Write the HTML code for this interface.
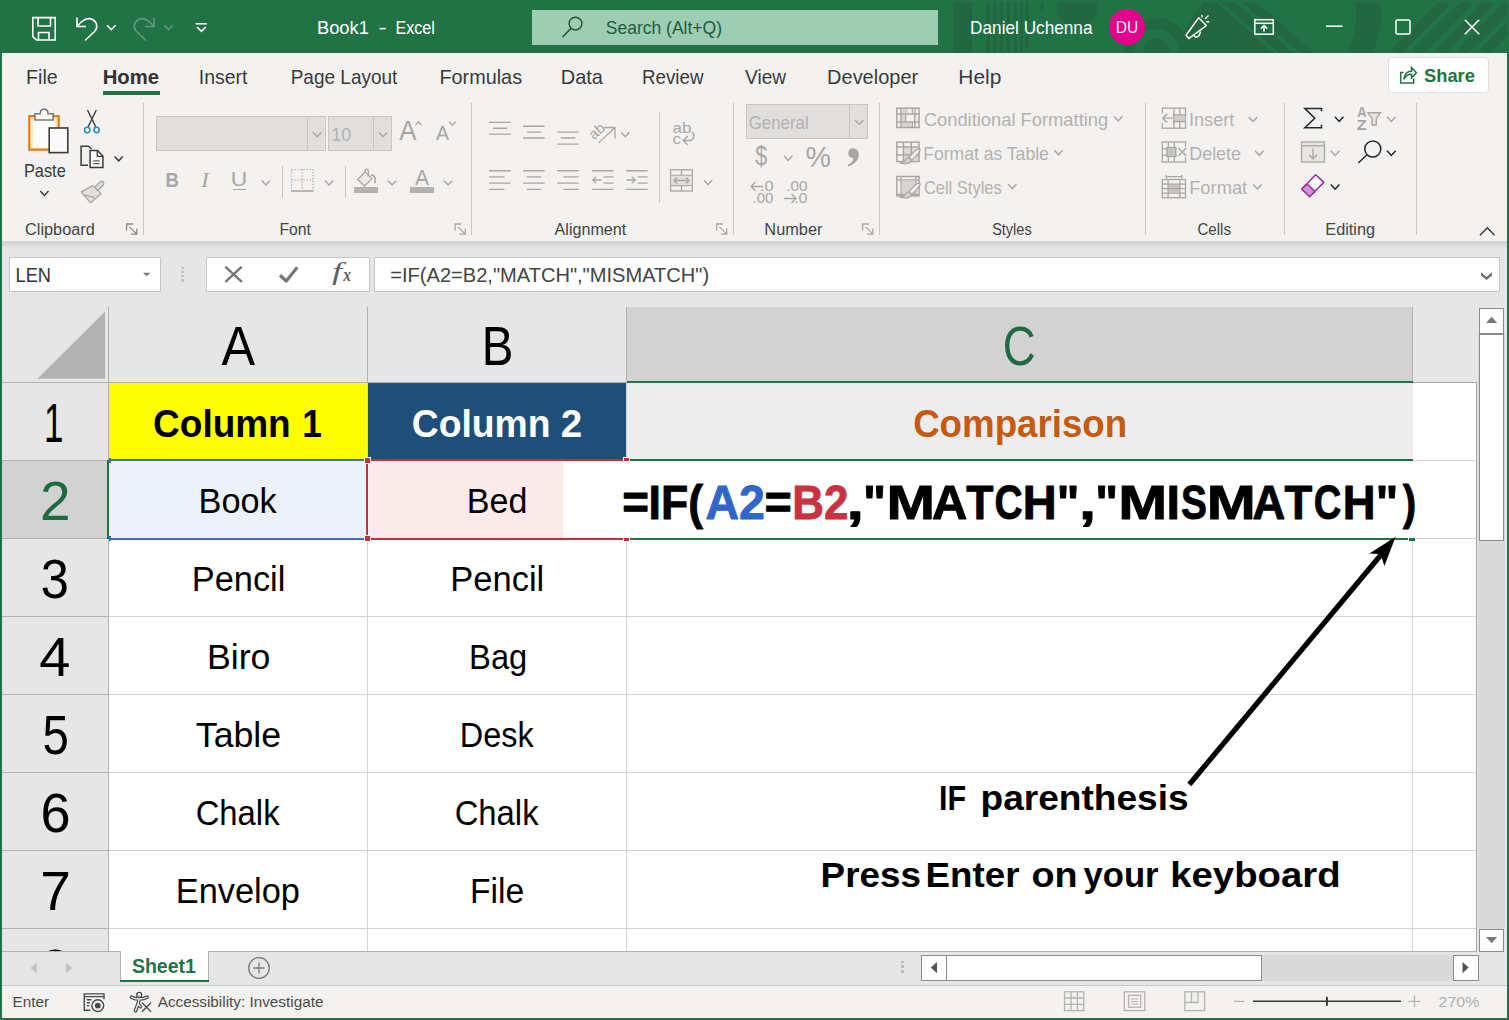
<!DOCTYPE html>
<html lang="en"><head><meta charset="utf-8"><title>Book1 - Excel</title>
<style>
html,body{margin:0;padding:0;}
body{width:1509px;height:1020px;overflow:hidden;position:relative;background:#e6e6e6;font-family:'Liberation Sans', sans-serif;}
#app div{position:absolute;box-sizing:border-box;}
#app{position:absolute;left:0;top:0;width:1509px;height:1020px;overflow:hidden;}
svg#ov{position:absolute;left:0;top:0;}
svg#ov text{font-family:'Liberation Sans', sans-serif;white-space:pre;}
</style></head><body>
<div id="app">
<div style="left:0px;top:0px;width:1509px;height:1020px;background:#217346;"></div>
<div style="left:2px;top:53px;width:1505px;height:188px;background:#f3f2f1;"></div>
<div style="left:2px;top:241px;width:1505px;height:8px;background:linear-gradient(#cfcfcf,#e6e6e6);"></div>
<div style="left:2px;top:249px;width:1505px;height:702px;background:#e6e6e6;"></div>
<div style="left:532px;top:10px;width:406px;height:35px;background:#9fcdb3;"></div>
<div style="left:103px;top:90.5px;width:57px;height:4px;background:#217346;"></div>
<div style="left:1388px;top:57px;width:101px;height:36px;background:#ffffff;border:1px solid #e1dfdd;border-radius:4px;"></div>
<div style="left:143px;top:103px;width:1px;height:132px;background:#c8c6c4;"></div>
<div style="left:471px;top:103px;width:1px;height:132px;background:#c8c6c4;"></div>
<div style="left:733px;top:103px;width:1px;height:132px;background:#c8c6c4;"></div>
<div style="left:879px;top:103px;width:1px;height:132px;background:#c8c6c4;"></div>
<div style="left:1145px;top:103px;width:1px;height:132px;background:#c8c6c4;"></div>
<div style="left:1284px;top:103px;width:1px;height:132px;background:#c8c6c4;"></div>
<div style="left:1416px;top:103px;width:1px;height:132px;background:#c8c6c4;"></div>
<div style="left:282px;top:166px;width:1px;height:32px;background:#c8c6c4;"></div>
<div style="left:345px;top:166px;width:1px;height:32px;background:#c8c6c4;"></div>
<div style="left:659px;top:112px;width:1px;height:91px;background:#c8c6c4;"></div>
<div style="left:156px;top:116px;width:170px;height:35px;background:#e1dfdd;border:1px solid #c8c6c4;"></div>
<div style="left:307px;top:116px;width:1px;height:35px;background:#c8c6c4;"></div>
<div style="left:328px;top:116px;width:64px;height:35px;background:#e1dfdd;border:1px solid #c8c6c4;"></div>
<div style="left:373px;top:116px;width:1px;height:35px;background:#c8c6c4;"></div>
<div style="left:232.5px;top:188.5px;width:13px;height:1.4px;background:#a8a6a4;"></div>
<div style="left:354px;top:187px;width:24px;height:6px;background:#b3b0ad;"></div>
<div style="left:410px;top:187px;width:24px;height:6px;background:#b3b0ad;"></div>
<div style="left:746px;top:104px;width:122px;height:35px;background:#e1dfdd;border:1px solid #c8c6c4;"></div>
<div style="left:849px;top:104px;width:1px;height:35px;background:#c8c6c4;"></div>
<div style="left:9px;top:257px;width:152px;height:35px;background:#ffffff;border:1px solid #c6c6c6;"></div>
<div style="left:181px;top:266.5px;width:3px;height:2.6px;background:#c2c2c2;"></div>
<div style="left:181px;top:270.7px;width:3px;height:2.6px;background:#c2c2c2;"></div>
<div style="left:181px;top:274.9px;width:3px;height:2.6px;background:#c2c2c2;"></div>
<div style="left:181px;top:279.1px;width:3px;height:2.6px;background:#c2c2c2;"></div>
<div style="left:206px;top:257px;width:164px;height:35px;background:#ffffff;border:1px solid #c6c6c6;"></div>
<div style="left:374px;top:257px;width:1126px;height:35px;background:#ffffff;border:1px solid #c6c6c6;"></div>
<div style="left:109px;top:383px;width:1367px;height:568px;background:#ffffff;"></div>
<div style="left:627px;top:307px;width:786px;height:75px;background:#d2d2d2;"></div>
<div style="left:108px;top:307px;width:1px;height:76px;background:#b1b1b1;"></div>
<div style="left:367px;top:307px;width:1px;height:76px;background:#b1b1b1;"></div>
<div style="left:626px;top:307px;width:1px;height:76px;background:#b1b1b1;"></div>
<div style="left:1412px;top:307px;width:1px;height:76px;background:#b1b1b1;"></div>
<div style="left:2px;top:382px;width:1475px;height:1px;background:#b1b1b1;"></div>
<div style="left:627px;top:381px;width:786px;height:2px;background:#217346;"></div>
<div style="left:108px;top:382px;width:1px;height:569px;background:#b1b1b1;"></div>
<div style="left:2px;top:460px;width:106px;height:1px;background:#b1b1b1;"></div>
<div style="left:2px;top:538px;width:106px;height:1px;background:#b1b1b1;"></div>
<div style="left:2px;top:616px;width:106px;height:1px;background:#b1b1b1;"></div>
<div style="left:2px;top:694px;width:106px;height:1px;background:#b1b1b1;"></div>
<div style="left:2px;top:772px;width:106px;height:1px;background:#b1b1b1;"></div>
<div style="left:2px;top:850px;width:106px;height:1px;background:#b1b1b1;"></div>
<div style="left:2px;top:928px;width:106px;height:1px;background:#b1b1b1;"></div>
<div style="left:2px;top:461px;width:106px;height:77px;background:#d2d2d2;"></div>
<div style="left:107px;top:460px;width:2px;height:79px;background:#217346;"></div>
<div style="left:367px;top:383px;width:1px;height:568px;background:#d4d4d4;"></div>
<div style="left:626px;top:383px;width:1px;height:568px;background:#d4d4d4;"></div>
<div style="left:1412px;top:383px;width:1px;height:568px;background:#d4d4d4;"></div>
<div style="left:109px;top:460px;width:1367px;height:1px;background:#d4d4d4;"></div>
<div style="left:109px;top:538px;width:1367px;height:1px;background:#d4d4d4;"></div>
<div style="left:109px;top:616px;width:1367px;height:1px;background:#d4d4d4;"></div>
<div style="left:109px;top:694px;width:1367px;height:1px;background:#d4d4d4;"></div>
<div style="left:109px;top:772px;width:1367px;height:1px;background:#d4d4d4;"></div>
<div style="left:109px;top:850px;width:1367px;height:1px;background:#d4d4d4;"></div>
<div style="left:109px;top:928px;width:1367px;height:1px;background:#d4d4d4;"></div>
<div style="left:1476px;top:383px;width:1px;height:568px;background:#a6a6a6;"></div>
<div style="left:1413px;top:382px;width:64px;height:1px;background:#a6a6a6;"></div>
<div style="left:109px;top:383px;width:258px;height:76.5px;background:#ffff00;"></div>
<div style="left:368px;top:383px;width:258px;height:76.5px;background:#1f4e79;"></div>
<div style="left:627px;top:383px;width:786px;height:76.5px;background:#ededed;"></div>
<div style="left:110px;top:461px;width:255px;height:77px;background:#edf1fa;"></div>
<div style="left:369px;top:461px;width:194px;height:77px;background:#fbeaea;"></div>
<div style="left:563px;top:461px;width:850px;height:77px;background:#ffffff;"></div>
<div style="left:630px;top:459px;width:783px;height:2px;background:#217346;"></div>
<div style="left:630px;top:538px;width:778px;height:2px;background:#217346;"></div>
<div style="left:1409px;top:538px;width:6px;height:3px;background:#217346;box-shadow:-1px 0 0 0 #ffffff;"></div>
<div style="left:111px;top:459px;width:253px;height:2px;background:#3c6cc4;"></div>
<div style="left:111px;top:538px;width:253px;height:2px;background:#3c6cc4;"></div>
<div style="left:109px;top:461px;width:1px;height:77px;background:#ffffff;"></div>
<div style="left:371px;top:459px;width:252px;height:2px;background:#c0323e;"></div>
<div style="left:371px;top:538px;width:252px;height:2px;background:#c0323e;"></div>
<div style="left:365px;top:461px;width:1px;height:77px;background:#ffffff;"></div>
<div style="left:368px;top:461px;width:1px;height:77px;background:#ffffff;"></div>
<div style="left:366px;top:461px;width:2px;height:77px;background:#c0323e;"></div>
<div style="left:365px;top:458px;width:5px;height:5px;background:#c0323e;box-shadow:0 0 0 1px #ffffff;"></div>
<div style="left:365px;top:536px;width:5px;height:5px;background:#c0323e;box-shadow:0 0 0 1px #ffffff;"></div>
<div style="left:624px;top:458px;width:5px;height:3px;background:#c0323e;box-shadow:0 0 0 1px #ffffff;"></div>
<div style="left:624px;top:538px;width:5px;height:3px;background:#c0323e;box-shadow:0 0 0 1px #ffffff;"></div>
<div style="left:109px;top:458px;width:2px;height:5px;background:#3c6cc4;"></div>
<div style="left:109px;top:536px;width:2px;height:5px;background:#3c6cc4;"></div>
<div style="left:1477px;top:307px;width:30px;height:644px;background:#e6e6e6;"></div>
<div style="left:1478px;top:333px;width:27px;height:596px;background:#d9d9d9;"></div>
<div style="left:1479px;top:308px;width:25px;height:25.5px;background:#fff;border:1px solid #8c8c8c;"></div>
<div style="left:1479px;top:333.5px;width:25px;height:207px;background:#fff;border:1px solid #8c8c8c;"></div>
<div style="left:2px;top:951px;width:1505px;height:35px;background:#e6e6e6;"></div>
<div style="left:2px;top:951px;width:1475px;height:1px;background:#b1b1b1;"></div>
<div style="left:120px;top:951px;width:89px;height:31px;background:#ffffff;border-left:1px solid #b1b1b1;border-right:1px solid #b1b1b1;"></div>
<div style="left:120px;top:979.5px;width:89px;height:2.3px;background:#217346;"></div>
<div style="left:900.5px;top:960.5px;width:3px;height:2.6px;background:#bdbdbd;"></div>
<div style="left:900.5px;top:965.3px;width:3px;height:2.6px;background:#bdbdbd;"></div>
<div style="left:900.5px;top:970.1px;width:3px;height:2.6px;background:#bdbdbd;"></div>
<div style="left:921px;top:955px;width:558px;height:25.5px;background:#d9d9d9;"></div>
<div style="left:921px;top:955px;width:25.5px;height:25.5px;background:#fff;border:1px solid #8c8c8c;"></div>
<div style="left:945.5px;top:955px;width:316px;height:25.5px;background:#fff;border:1px solid #8c8c8c;"></div>
<div style="left:1453px;top:955px;width:25.5px;height:25.5px;background:#fff;border:1px solid #8c8c8c;"></div>
<div style="left:1479px;top:928.5px;width:25px;height:23.5px;background:#fff;border:1px solid #8c8c8c;"></div>
<div style="left:2px;top:985.5px;width:1505px;height:32.7px;background:#f3f2f1;"></div>
<div style="left:2px;top:985px;width:1505px;height:1px;background:#c8c8c8;"></div>
<svg id="ov" width="1509" height="1020" viewBox="0 0 1509 1020">
<defs><clipPath id="tb"><rect x="2" y="2" width="1505" height="51"/></clipPath></defs><g clip-path="url(#tb)" fill="none" stroke="#22673f"><rect x="953" y="0" width="19" height="53" fill="#22673f" stroke="none"/><path d="M988.200 0 V53 M994.800 0 V53 M1001.400 0 V53 M1008.300 0 V53 M1015.300 0 V53 M1021.500 0 V53 M1027.200 0 V48" stroke-width="3.200"/><path d="M1042 0 V11" stroke-width="3"/><circle cx="1077" cy="8" r="20" fill="#22673f" stroke="none"/><circle cx="1156.500" cy="51" r="27.400" stroke-width="10.800"/><circle cx="1156.500" cy="51" r="13" fill="#22673f" stroke="none"/><path d="M1180 40 C1190 20 1200 8 1204 0 H1222 L1290 53 H1180 Z" fill="#22673f" stroke="none"/><path d="M1216 -3 L1282 56 M1236 -3 L1302 56 M1256 -3 L1322 56" stroke="#217346" stroke-width="7"/><path d="M1222 -3 L1290 56 M1243 -3 L1311 56" stroke-width="9"/><path d="M1366 -3 Q1374 26 1358 56" stroke-width="24"/><path d="M1395 53 L1446 2 M1417 53 L1468 2 M1439 53 L1490 2 M1461 53 L1512 2 M1483 53 L1534 2" stroke-width="10"/></g>
<g fill="none" stroke="#ffffff" stroke-width="1.6"><path d="M32.8 17.6 H55.2 V40 H36.5 L32.8 36.6 Z"/><path d="M38 17.6 V26 H50.5 V17.6"/><path d="M38.5 40 V32.5 H49 V40"/></g>
<path d="M77 17.5 V26.5 H86 M77.5 26 C82 20 88 17 92.5 19.5 C97.5 22.5 98 28 94.5 31.5 L85 40.5" fill="none" stroke="#ffffff" stroke-width="1.6"/>
<path d="M107 25.2 L111.3 29.6 L115.6 25.2" fill="none" stroke="#ffffff" stroke-width="1.5"/>
<path d="M154 17.5 V26.5 H145 M153.5 26 C149 20 143 17 138.5 19.5 C133.500 22.5 133 28 136.5 31.500 L146 40.5" fill="none" stroke="#5f9b7a" stroke-width="1.6"/>
<path d="M164.3 25.2 L168.60000000000002 29.6 L172.9 25.2" fill="none" stroke="#5f9b7a" stroke-width="1.5"/>
<path d="M195.500 23.8 H207" stroke="#ffffff" stroke-width="1.5"/>
<path d="M197 27 L201.4 31.4 L205.8 27" fill="none" stroke="#ffffff" stroke-width="1.6"/>
<text y="33.5" font-size="18.5" fill="#ffffff"><tspan x="317.04" textLength="51.79" lengthAdjust="spacingAndGlyphs">Book1</tspan> <tspan x="378.5" textLength="8.16" lengthAdjust="spacingAndGlyphs">-</tspan> <tspan x="395.51" textLength="39.34" lengthAdjust="spacingAndGlyphs">Excel</tspan></text>
<g fill="none" stroke="#1f5c3a" stroke-width="1.5"><circle cx="575.500" cy="23.6" r="6.4"/><path d="M571 28.400 L562.5 37"/></g>
<text x="605.71" y="33.5" font-size="18.5" fill="#1f5c3a" textLength="116.36" lengthAdjust="spacingAndGlyphs">Search (Alt+Q)</text>
<text x="970.12" y="33.8" font-size="18.5" fill="#ffffff" textLength="122.39" lengthAdjust="spacingAndGlyphs">Daniel Uchenna</text>
<circle cx="1127" cy="27" r="18" fill="#e3008c"/>
<text x="1115.75" y="33" font-size="16" fill="#fdeaf5" textLength="22.48" lengthAdjust="spacingAndGlyphs">DU</text>
<g fill="none" stroke="#ffffff" stroke-width="1.5" stroke-linejoin="round"><path d="M1186 35.200 L1188.900 38.500 L1206.300 25.600 L1198.700 17.800 Z"/><path d="M1193.900 35.300 C1194.800 38.200 1199.500 37.800 1200.400 31.500"/><path d="M1201.800 15 L1202.200 17.300 M1205 18.900 L1208.500 15.400 M1206.300 21.700 H1209.200" stroke-width="1.4"/></g>
<g fill="none" stroke="#ffffff" stroke-width="1.5"><rect x="1254.800" y="19.700" width="18.500" height="14.500"/><path d="M1254.800 23.300 H1273.300"/><path d="M1264 31.800 V26 M1260.800 28.600 L1264 25.600 L1267.200 28.600"/></g>
<path d="M1326 26.200 H1342.500" stroke="#ffffff" stroke-width="1.5"/>
<rect x="1396" y="19.900" width="14" height="14" rx="1.500" fill="none" stroke="#ffffff" stroke-width="1.5"/>
<path d="M1464.800 19.800 L1479.200 34.200 M1479.200 19.800 L1464.800 34.200" stroke="#ffffff" stroke-width="1.5"/>
<text x="26.02" y="83.9" font-size="19.8" fill="#3b3a39" textLength="31.79" lengthAdjust="spacingAndGlyphs">File</text>
<text x="198.85" y="83.9" font-size="19.8" fill="#3b3a39" textLength="48.67" lengthAdjust="spacingAndGlyphs">Insert</text>
<text x="290.68" y="83.9" font-size="19.8" fill="#3b3a39" textLength="106.73" lengthAdjust="spacingAndGlyphs">Page Layout</text>
<text x="439.52" y="83.9" font-size="19.8" fill="#3b3a39" textLength="82.53" lengthAdjust="spacingAndGlyphs">Formulas</text>
<text x="560.7" y="83.9" font-size="19.8" fill="#3b3a39" textLength="42.25" lengthAdjust="spacingAndGlyphs">Data</text>
<text x="642.0" y="83.9" font-size="19.8" fill="#3b3a39" textLength="61.48" lengthAdjust="spacingAndGlyphs">Review</text>
<text x="745.1" y="83.9" font-size="19.8" fill="#3b3a39" textLength="41.09" lengthAdjust="spacingAndGlyphs">View</text>
<text x="827.1" y="83.9" font-size="19.8" fill="#3b3a39" textLength="91.06" lengthAdjust="spacingAndGlyphs">Developer</text>
<text x="958.33" y="83.9" font-size="19.8" fill="#3b3a39" textLength="43.05" lengthAdjust="spacingAndGlyphs">Help</text>
<text x="102.68" y="83.9" font-size="19.8" fill="#323130" font-weight="700" textLength="56.29" lengthAdjust="spacingAndGlyphs">Home</text>
<g fill="none" stroke="#217346" stroke-width="1.5"><path d="M1403.500 72.500 H1400.700 V83 H1413.700 V78.500"/><path d="M1403.800 79.500 C1404 73.500 1408 71 1411.500 71.200 V67.400 L1416.400 72.700 L1411.500 77.800 V74.300 C1408.500 74.200 1405.500 75.500 1403.800 79.500 Z"/></g>
<text x="1424.05" y="82.3" font-size="19" fill="#217346" font-weight="700" textLength="50.78" lengthAdjust="spacingAndGlyphs">Share</text>
<text x="25.09" y="234.5" font-size="15.8" fill="#444444" textLength="69.68" lengthAdjust="spacingAndGlyphs">Clipboard</text>
<text x="279.55" y="234.5" font-size="15.8" fill="#444444" textLength="31.35" lengthAdjust="spacingAndGlyphs">Font</text>
<text x="554.6" y="234.5" font-size="15.8" fill="#444444" textLength="71.61" lengthAdjust="spacingAndGlyphs">Alignment</text>
<text x="764.39" y="234.5" font-size="15.8" fill="#444444" textLength="58.08" lengthAdjust="spacingAndGlyphs">Number</text>
<text x="992.15" y="234.5" font-size="15.8" fill="#444444" textLength="39.54" lengthAdjust="spacingAndGlyphs">Styles</text>
<text x="1197.45" y="234.5" font-size="15.8" fill="#444444" textLength="33.55" lengthAdjust="spacingAndGlyphs">Cells</text>
<text x="1325.3" y="234.5" font-size="15.8" fill="#444444" textLength="49.81" lengthAdjust="spacingAndGlyphs">Editing</text>
<path d="M126.6 230.4 V224.0 H133 M129.5 226.9 L136.5 233.9 M136.8 228.4 V234.20000000000002 H131" fill="none" stroke="#8a8886" stroke-width="1.3"/>
<path d="M455.1 230.4 V224.0 H461.5 M458.0 226.9 L465.0 233.9 M465.3 228.4 V234.20000000000002 H459.5" fill="none" stroke="#a8a6a4" stroke-width="1.3"/>
<path d="M716.6 230.4 V224.0 H723 M719.5 226.9 L726.5 233.9 M726.8 228.4 V234.20000000000002 H721" fill="none" stroke="#a8a6a4" stroke-width="1.3"/>
<path d="M862.6 230.4 V224.0 H869 M865.5 226.9 L872.5 233.9 M872.8 228.4 V234.20000000000002 H867" fill="none" stroke="#a8a6a4" stroke-width="1.3"/>
<g stroke-linejoin="miter"><rect x="29.200" y="116.100" width="29.500" height="33.600" fill="#fbe3b0" stroke="#e3750d" stroke-width="2"/><rect x="32.800" y="118.900" width="22.600" height="28.500" fill="#fbfbfb"/><path d="M35 120 V113.700 H40.200 C40.200 107.700 48 107.700 48 113.700 H53.200 V120 Z" fill="#f8f7f6" stroke="#7a7876" stroke-width="1.500"/><rect x="49.200" y="128" width="18.600" height="24.600" fill="#fafafa" stroke="#3b3a39" stroke-width="1.600"/></g>
<text x="23.89" y="176.8" font-size="18.5" fill="#3b3a39" textLength="41.88" lengthAdjust="spacingAndGlyphs">Paste</text>
<path d="M40.3 191 L44.4 195.4 L48.5 191" fill="none" stroke="#3b3a39" stroke-width="1.5"/>
<g fill="none"><path d="M87.500 110 L95.800 127 M96.300 110 L88 127" stroke="#3b3a39" stroke-width="1.400"/><circle cx="87.200" cy="130" r="2.700" stroke="#1e8bcd" stroke-width="1.500"/><circle cx="96.600" cy="130" r="2.700" stroke="#1e8bcd" stroke-width="1.500"/></g>
<g fill="none" stroke="#3b3a39" stroke-width="1.500"><path d="M88 165.200 H81.100 V146.200 H88.500 L91.500 149"/><path d="M90.100 150.500 H97.500 L102.900 156.100 V167.500 H90.100 Z" fill="#fafafa"/><path d="M97.300 150.800 V156.300 H102.700" stroke-width="1.300"/><path d="M93.200 160.900 H99.600 M93.200 163.700 H99.600" stroke-width="1.200" stroke="#605e5c"/></g>
<path d="M114.6 156.4 L118.69999999999999 160.8 L122.8 156.4" fill="none" stroke="#3b3a39" stroke-width="1.5"/>
<g fill="#e1dfdd" stroke="#a8a6a4" stroke-width="1.300" stroke-linejoin="round"><path d="M100.300 181.700 C102.400 180.300 104.800 182.800 103.300 184.800 L98 190.500 L94.700 187.300 Z"/><path d="M81.200 191.900 L92.800 185.600 L101.100 193.800 L90.500 202.800 Z"/><path d="M84.500 194.800 L94.500 197.600" fill="none"/></g>
<path d="M313 132.2 L317.2 136.7 L321.4 132.2" fill="none" stroke="#a8a6a4" stroke-width="1.5"/>
<text x="331.35" y="140.5" font-size="17.5" fill="#b3b1af" textLength="20.02" lengthAdjust="spacingAndGlyphs">10</text>
<path d="M378.8 132.2 L383.0 136.7 L387.2 132.2" fill="none" stroke="#a8a6a4" stroke-width="1.5"/>
<text x="399.2" y="140" font-size="27" fill="#a8a6a4" textLength="17.25" lengthAdjust="spacingAndGlyphs">A</text>
<path d="M415.500 125.400 L418.600 121.800 L421.700 125.400" fill="none" stroke="#a8a6a4" stroke-width="1.300"/>
<text x="436.0" y="140" font-size="20.5" fill="#a8a6a4" textLength="13.04" lengthAdjust="spacingAndGlyphs">A</text>
<path d="M449.200 121.800 L452.500 125.400 L455.800 121.800" fill="none" stroke="#a8a6a4" stroke-width="1.300"/>
<text x="165.4" y="186.6" font-size="20" fill="#a8a6a4" font-weight="700" textLength="13.38" lengthAdjust="spacingAndGlyphs">B</text>
<text x="201.12" y="186.6" font-size="20" fill="#a8a6a4" font-style="italic" textLength="7.99" lengthAdjust="spacingAndGlyphs" style="font-family:'Liberation Serif',serif">I</text>
<text x="230.79" y="186.4" font-size="19.5" fill="#a8a6a4" textLength="16.47" lengthAdjust="spacingAndGlyphs">U</text>
<path d="M261.7 180.4 L265.9 184.9 L270.09999999999997 180.4" fill="none" stroke="#a8a6a4" stroke-width="1.5"/>
<g fill="none" stroke="#a8a6a4"><path d="M291.500 169.500 H313 V190 M291.500 169.500 V190 M302.200 169.500 V190 M291.500 180 H313" stroke-width="1.200" stroke-dasharray="1.300 1.700"/><path d="M291 191 H313.500" stroke-width="1.600"/></g>
<path d="M324.8 180.4 L329.0 184.9 L333.2 180.4" fill="none" stroke="#a8a6a4" stroke-width="1.5"/>
<g fill="none" stroke="#a8a6a4" stroke-width="1.300" stroke-linejoin="round"><path d="M357.800 179.500 L365.200 171.900 L372 178.600 L364.600 186 Z" fill="#eceae8"/><path d="M365.300 173 V170.700 C365.300 168.500 368.300 168.500 368.300 170.700 V176.500"/><path d="M371 175.200 C374.200 174.600 376 177.600 374.900 183.200" stroke-width="1.700"/></g>
<path d="M387.9 180.4 L392.09999999999997 184.9 L396.29999999999995 180.4" fill="none" stroke="#a8a6a4" stroke-width="1.5"/>
<text x="415.1" y="185.4" font-size="22.5" fill="#a8a6a4" textLength="13.94" lengthAdjust="spacingAndGlyphs">A</text>
<path d="M443.9 180.4 L448.09999999999997 184.9 L452.29999999999995 180.4" fill="none" stroke="#a8a6a4" stroke-width="1.5"/>
<path d="M489.1 122.3 H510.6 M492.8 128.2 H507.3 M489.1 134.1 H510.6 " stroke="#a8a6a4" stroke-width="1.350" fill="none"/>
<path d="M523.1 126.2 H544.6 M526.8 132.1 H541.3 M523.1 138 H544.6 " stroke="#a8a6a4" stroke-width="1.350" fill="none"/>
<path d="M557.2 132.1 H578.7 M560.9 138 H575.4 M557.2 144.1 H578.7 " stroke="#a8a6a4" stroke-width="1.350" fill="none"/>
<g fill="none" stroke="#a8a6a4" stroke-width="1.300"><path d="M598.600 142.900 L614.700 127.700 M604 127.500 H615 V138.500"/></g>
<text x="-0.58" y="0" font-size="14.5" fill="#a8a6a4" textLength="16.2" lengthAdjust="spacingAndGlyphs" transform="translate(594.300 139.800) rotate(-41)">ab</text>
<path d="M621.2 132.2 L625.3000000000001 136.7 L629.4000000000001 132.2" fill="none" stroke="#a8a6a4" stroke-width="1.5"/>
<text x="672.52" y="133" font-size="15" fill="#a8a6a4" textLength="18.9" lengthAdjust="spacingAndGlyphs">ab</text>
<text x="672.51" y="143.5" font-size="15" fill="#a8a6a4" textLength="8.62" lengthAdjust="spacingAndGlyphs">c</text>
<path d="M692 132 C695 134 694.500 140.500 689 140.500 H683.500 M687.700 136 L683.200 140.500 L687.700 145" fill="none" stroke="#a8a6a4" stroke-width="1.400"/>
<path d="M489.1 170.7 H510.6 M489.1 176.9 H504.5 M489.1 183.1 H510.6 M489.1 189.3 H504.5 " stroke="#a8a6a4" stroke-width="1.350" fill="none"/>
<path d="M523.1 170.7 H544.6 M526.8 176.9 H541.1 M523.1 183.1 H544.6 M526.8 189.3 H541.1 " stroke="#a8a6a4" stroke-width="1.350" fill="none"/>
<path d="M557.2 170.7 H578.7 M563.3 176.9 H578.7 M557.2 183.1 H578.7 M563.3 189.3 H578.7 " stroke="#a8a6a4" stroke-width="1.350" fill="none"/>
<path d="M592.1 170.7 H613.6 M603.6 176.9 H613.6 M603.6 183.1 H613.6 M592.1 189.3 H613.6 " stroke="#a8a6a4" stroke-width="1.350" fill="none"/>
<path d="M601.500 180 H593 M596.300 176.600 L592.800 180 L596.300 183.400" fill="none" stroke="#a8a6a4" stroke-width="1.300"/>
<path d="M626.1 170.7 H647.6 M637.6 176.9 H647.6 M637.6 183.1 H647.6 M626.1 189.3 H647.6 " stroke="#a8a6a4" stroke-width="1.350" fill="none"/>
<path d="M626.500 180 H635 M631.700 176.600 L635.200 180 L631.700 183.400" fill="none" stroke="#a8a6a4" stroke-width="1.300"/>
<g fill="none" stroke="#a8a6a4" stroke-width="1.300"><rect x="670.600" y="169.800" width="21.700" height="21.200"/><path d="M670.600 175.300 H692.300 M670.600 185.600 H692.300 M681.500 169.800 V175.300 M681.500 185.600 V191"/><rect x="671" y="175.700" width="21" height="9.500" fill="#e1dfdd" stroke="none"/><path d="M674 180.500 H689 M677 177.500 L674 180.500 L677 183.500 M686 177.500 L689 180.500 L686 183.500"/></g>
<path d="M704 180.2 L708.1 184.7 L712.2 180.2" fill="none" stroke="#a8a6a4" stroke-width="1.5"/>
<text x="748.76" y="128.7" font-size="18.5" fill="#b3b1af" textLength="59.99" lengthAdjust="spacingAndGlyphs">General</text>
<path d="M855.2 120 L859.3000000000001 124.5 L863.4000000000001 120" fill="none" stroke="#a8a6a4" stroke-width="1.5"/>
<text x="755.18" y="165.3" font-size="27.5" fill="#a8a6a4" textLength="11.96" lengthAdjust="spacingAndGlyphs">$</text>
<path d="M784 155.8 L788.2 160.4 L792.4 155.8" fill="none" stroke="#a8a6a4" stroke-width="1.5"/>
<text x="805.5" y="167.3" font-size="29" fill="#a8a6a4" textLength="25.48" lengthAdjust="spacingAndGlyphs">%</text>
<path d="M853 148.200 C856.500 148.200 858.800 151 858.800 154.500 C858.800 160 854.500 164.500 848.300 166.400 L847.600 164.800 C851.500 163.200 853.500 160.500 853.300 158 C850.500 158.200 848.300 156 848.300 153.200 C848.300 150.300 850.300 148.200 853 148.200 Z" fill="#a8a6a4"/>
<text x="760.0" y="191.1" font-size="14" fill="#a8a6a4" textLength="13.86" lengthAdjust="spacingAndGlyphs">.0</text>
<text x="752.55" y="202.9" font-size="14" fill="#a8a6a4" textLength="20.88" lengthAdjust="spacingAndGlyphs">.00</text>
<path d="M763 186.500 H751 M755.500 182 L751 186.500 L755.500 191" fill="none" stroke="#a8a6a4" stroke-width="1.300"/>
<text x="786.33" y="191.1" font-size="14" fill="#a8a6a4" textLength="21.21" lengthAdjust="spacingAndGlyphs">.00</text>
<text x="794.15" y="202.9" font-size="14" fill="#a8a6a4" textLength="13.39" lengthAdjust="spacingAndGlyphs">.0</text>
<path d="M784 198.500 H796 M791.500 194 L796 198.500 L791.500 203" fill="none" stroke="#a8a6a4" stroke-width="1.300"/>
<text x="923.78" y="125.6" font-size="18.5" fill="#b3b1af" textLength="184.42" lengthAdjust="spacingAndGlyphs">Conditional Formatting</text>
<path d="M1114 116.3 L1118.2 120.89999999999999 L1122.4 116.3" fill="none" stroke="#a8a6a4" stroke-width="1.5"/>
<text x="923.3" y="159.9" font-size="18.5" fill="#b3b1af" textLength="125.52" lengthAdjust="spacingAndGlyphs">Format as Table</text>
<path d="M1054.4 150.3 L1058.5 154.8 L1062.6000000000001 150.3" fill="none" stroke="#a8a6a4" stroke-width="1.5"/>
<text x="923.88" y="193.9" font-size="18.5" fill="#b3b1af" textLength="77.88" lengthAdjust="spacingAndGlyphs">Cell Styles</text>
<path d="M1008.2 184.2 L1012.3000000000001 188.7 L1016.4000000000001 184.2" fill="none" stroke="#a8a6a4" stroke-width="1.5"/>
<g fill="none" stroke="#a8a6a4" stroke-width="1.500"><rect x="901.9" y="108.8" width="6.2" height="4.6" fill="#d6d4d2" stroke="none"/><rect x="901.9" y="115.0" width="3.4" height="6" fill="#d6d4d2" stroke="none"/><rect x="901.9" y="123.0" width="9.6" height="4" fill="#d6d4d2" stroke="none"/><rect x="896.85" y="108.15" width="22.2" height="19.4"/><path d="M900.9 108.15 V127.55 M914.9 108.15 V127.55 M896.85 113.9 H919.05 M896.85 122.1 H919.05"/><path d="M905.7 113.9 V122.1 M912.3 108.15 V113.9 M912.3 122.1 V127.55" stroke-width="1.2"/></g>
<g fill="none" stroke="#a8a6a4" stroke-width="1.500"><rect x="904.3" y="147.7" width="14.6" height="13.8" fill="#dddbd9" stroke="none"/><rect x="896.85" y="142.15" width="22.2" height="19.4"/><path d="M903.5 142.15 V161.55 M911.3 142.15 V161.55 M896.85 146.9 H919.05 M896.85 155.1 H919.05"/><path d="M897.1 159.9 H919.1 V147.4 L906.1 159.9 Z" fill="#f3f2f1" stroke="none" opacity="0"/><path d="M919.7 149.0 C921.3 150.4 916.6 156.4 911.7 160.0 L908.9 157.4 C913.1 152.4 918.1 148.0 919.7 149.0 Z" fill="#f3f2f1" stroke-width="1.3"/><path d="M908.9 157.4 C906.1 157.8 905.5 159.8 904.5 161.2 C903.1 162.4 901.1 162.7 899.5 162.7 C904.1 164.4 910.7 164.0 911.7 160.0 Z" fill="#d2d0ce" stroke-width="1.2"/></g>
<g fill="none" stroke="#a8a6a4" stroke-width="1.500"><rect x="902.0" y="180.9" width="13.2" height="12.6" fill="#d6d4d2" stroke="none"/><rect x="896.85" y="176.45" width="22.2" height="19.4"/><path d="M901.0 176.45 V195.85 M915.9 176.45 V195.85 M896.85 179.9 H919.05 M896.85 194.3 H919.05" stroke-width="1.3"/><path d="M897.1 194.2 H919.1 V181.7 L906.1 194.2 Z" fill="#f3f2f1" stroke="none" opacity="0"/><path d="M919.7 183.3 C921.3 184.7 916.6 190.7 911.7 194.3 L908.9 191.7 C913.1 186.7 918.1 182.3 919.7 183.3 Z" fill="#f3f2f1" stroke-width="1.3"/><path d="M908.9 191.7 C906.1 192.1 905.5 194.1 904.5 195.5 C903.1 196.7 901.1 197.0 899.5 197.0 C904.1 198.7 910.7 198.3 911.7 194.3 Z" fill="#d2d0ce" stroke-width="1.2"/></g>
<text x="1188.97" y="126" font-size="18.5" fill="#b3b1af" textLength="45.34" lengthAdjust="spacingAndGlyphs">Insert</text>
<path d="M1248.8 117 L1253.1 121.5 L1257.3999999999999 117" fill="none" stroke="#a8a6a4" stroke-width="1.5"/>
<text x="1189.16" y="159.8" font-size="18.5" fill="#b3b1af" textLength="51.96" lengthAdjust="spacingAndGlyphs">Delete</text>
<path d="M1255 150.8 L1259.3 155.3 L1263.6 150.8" fill="none" stroke="#a8a6a4" stroke-width="1.5"/>
<text x="1189.13" y="193.7" font-size="18.5" fill="#b3b1af" textLength="58.1" lengthAdjust="spacingAndGlyphs">Format</text>
<path d="M1253.2 184.5 L1257.4 189.0 L1261.6000000000001 184.5" fill="none" stroke="#a8a6a4" stroke-width="1.5"/>
<g fill="none" stroke="#a8a6a4" stroke-width="1.300"><rect x="1162.3" y="108.2" width="23.200" height="20" fill="#f3f2f1"/><rect x="1174.3" y="115.0" width="11" height="6.500" fill="#d2d0ce" stroke="none"/><path d="M1162.3 114.8 H1185.5 M1162.3 121.5 H1185.5 M1173.8999999999999 108.2 V128.2 M1179.8 108.2 V114.8 M1179.8 121.5 V128.2"/><rect x="1160.8" y="113.2" width="12" height="9.800" fill="#f3f2f1" stroke="none"/><path d="M1172.8 118.2 H1162.8 M1167.3 113.7 L1162.8 118.2 L1167.3 122.7"/></g>
<g fill="none" stroke="#a8a6a4" stroke-width="1.300"><rect x="1162.3" y="142" width="23.200" height="20" fill="#f3f2f1"/><path d="M1162.3 148.6 H1185.5 M1162.3 155.3 H1185.5 M1168.3 142 V162 M1174.3 142 V162"/><rect x="1166.8" y="147.5" width="9" height="9" fill="#c8c6c4"/><rect x="1176.8" y="146.5" width="10.500" height="11" fill="#f3f2f1" stroke="none"/><path d="M1178.3 148 L1186.3 156 M1186.3 148 L1178.3 156"/></g>
<g fill="none" stroke="#a8a6a4" stroke-width="1.300"><path d="M1166.3 175.0 V178.5 M1181.8 175.0 V178.5 M1166.3 176.7 H1181.8"/><rect x="1162.3" y="179.5" width="23.200" height="18.200" fill="#f3f2f1"/><rect x="1168.3" y="184.5" width="11.500" height="8" fill="#c8c6c4" stroke="none"/><path d="M1162.3 184.1 H1185.5 M1162.3 188.6 H1185.5 M1162.3 193.1 H1185.5 M1168.1 179.5 V197.7 M1179.8 179.5 V197.7"/></g>
<path d="M1321.500 111.300 V108.400 H1304.800 L1314.800 118.200 L1304.800 127.700 H1321.500 V124.800" fill="none" stroke="#262626" stroke-width="1.500"/>
<path d="M1334.9 116.8 L1339.2 121.39999999999999 L1343.5 116.8" fill="none" stroke="#262626" stroke-width="1.5"/>
<text x="1357.18" y="116.5" font-size="14.5" fill="#a8a6a4" font-weight="700" textLength="9.38" lengthAdjust="spacingAndGlyphs">A</text>
<text x="1356.71" y="130" font-size="14.5" fill="#a8a6a4" font-weight="700" textLength="9.91" lengthAdjust="spacingAndGlyphs">Z</text>
<path d="M1367.700 112.700 H1380.700 L1376.300 118.700 V125 H1372.100 V118.700 Z" fill="#e8e6e4" stroke="#a8a6a4" stroke-width="1.400" stroke-linejoin="round"/>
<path d="M1387 116.8 L1391.3 121.39999999999999 L1395.6 116.8" fill="none" stroke="#a8a6a4" stroke-width="1.5"/>
<g fill="none" stroke="#a8a6a4" stroke-width="1.300"><rect x="1301.500" y="142" width="23" height="20" fill="#e8e6e4"/><path d="M1301.500 145.800 H1324.500"/><path d="M1313 148.500 V158.500 M1309 154.800 L1313 158.800 L1317 154.800"/></g>
<path d="M1330.8 150.8 L1335.1 155.4 L1339.3999999999999 150.8" fill="none" stroke="#a8a6a4" stroke-width="1.5"/>
<g fill="none" stroke="#262626" stroke-width="1.500"><circle cx="1372.800" cy="149" r="8"/><path d="M1367 154.800 L1358.300 163"/></g>
<path d="M1387 150.8 L1391.3 155.4 L1395.6 150.8" fill="none" stroke="#262626" stroke-width="1.5"/>
<g stroke="#9f2ba8" stroke-width="1.500" stroke-linejoin="round"><path d="M1315.700 174.800 L1323.800 182.400 L1309.600 196.500 L1301.700 189 Z" fill="#fdfdfd"/><path d="M1307.300 184 L1315 191.600 L1309.600 196.500 L1301.700 189 Z" fill="#d792dc"/></g>
<path d="M1330.8 184.6 L1335.1 189.2 L1339.3999999999999 184.6" fill="none" stroke="#262626" stroke-width="1.5"/>
<path d="M1480 235.300 L1487.300 227.800 L1494.600 235.300" fill="none" stroke="#3b3a39" stroke-width="1.500"/>
<text x="15.54" y="282.2" font-size="19.5" fill="#333333" textLength="35.53" lengthAdjust="spacingAndGlyphs">LEN</text>
<path d="M143 272.800 H150.400 L146.700 276.300 Z" fill="#777"/>
<path d="M226 267.300 L241.300 281.300 M241 267.300 L226 281.300" stroke="#767676" stroke-width="2.400" stroke-linecap="round" fill="none"/>
<path d="M280 275.300 L286.300 281 L297.300 267.300" stroke="#767676" stroke-width="3.200" stroke-linejoin="round" fill="none"/>
<text x="331.94" y="280.2" font-size="25" fill="#5f5f5f" font-style="italic" textLength="10.1" lengthAdjust="spacingAndGlyphs" style="font-family:'Liberation Serif',serif">f</text>
<text x="343.13" y="280.7" font-size="19.5" fill="#5f5f5f" font-weight="700" font-style="italic" textLength="7.76" lengthAdjust="spacingAndGlyphs" style="font-family:'Liberation Serif',serif">x</text>
<text x="390.3" y="281.6" font-size="19.5" fill="#444444" textLength="318.8" lengthAdjust="spacingAndGlyphs">=IF(A2=B2,"MATCH","MISMATCH")</text>
<path d="M1481 272.300 L1486.500 277 L1492 272.300 V275.400 L1486.500 280.100 L1481 275.400 Z" fill="#6e6e6e"/>
<path d="M105 311.400 V378.800 H37.400 Z" fill="#b3b3b3"/>
<defs><clipPath id="gridclip"><rect x="0" y="300" width="1509" height="651"/></clipPath></defs><g clip-path="url(#gridclip)">
<text x="221.45" y="365.3" font-size="56" fill="#000" textLength="33.6" lengthAdjust="spacingAndGlyphs">A</text>
<text x="481.7" y="365.3" font-size="56" fill="#000" textLength="31.67" lengthAdjust="spacingAndGlyphs">B</text>
<text x="1002.87" y="365.3" font-size="56" fill="#1e6b41" textLength="32.87" lengthAdjust="spacingAndGlyphs">C</text>
<text x="43.88" y="442.2" font-size="56" fill="#000" textLength="19.43" lengthAdjust="spacingAndGlyphs">1</text>
<text x="40.05" y="520.2" font-size="56" fill="#1e6b41" textLength="30.56" lengthAdjust="spacingAndGlyphs">2</text>
<text x="40.78" y="598.2" font-size="56" fill="#000" textLength="28.1" lengthAdjust="spacingAndGlyphs">3</text>
<text x="39.28" y="676.2" font-size="56" fill="#000" textLength="31.17" lengthAdjust="spacingAndGlyphs">4</text>
<text x="42.51" y="754.2" font-size="56" fill="#000" textLength="26.34" lengthAdjust="spacingAndGlyphs">5</text>
<text x="40.4" y="832.2" font-size="56" fill="#000" textLength="30.02" lengthAdjust="spacingAndGlyphs">6</text>
<text x="40.34" y="910.2" font-size="56" fill="#000" textLength="30.68" lengthAdjust="spacingAndGlyphs">7</text>
<text x="40.41" y="988.2" font-size="56" fill="#000" textLength="29.58" lengthAdjust="spacingAndGlyphs">8</text>
</g>
<text y="436.7" font-size="38" fill="#000" font-weight="700"><tspan x="153.12" textLength="137.56" lengthAdjust="spacingAndGlyphs">Column</tspan> <tspan x="302.18" textLength="19.64" lengthAdjust="spacingAndGlyphs">1</tspan></text>
<text y="436.7" font-size="38" fill="#fff" font-weight="700"><tspan x="411.81" textLength="138.69" lengthAdjust="spacingAndGlyphs">Column</tspan> <tspan x="560.65" textLength="21.44" lengthAdjust="spacingAndGlyphs">2</tspan></text>
<text x="913.13" y="436.7" font-size="38" fill="#c55a11" font-weight="700" textLength="214.03" lengthAdjust="spacingAndGlyphs">Comparison</text>
<text x="198.55" y="512.7" font-size="34.8" fill="#000" textLength="78.22" lengthAdjust="spacingAndGlyphs">Book</text>
<text x="466.77" y="512.7" font-size="34.8" fill="#000" textLength="60.62" lengthAdjust="spacingAndGlyphs">Bed</text>
<text x="191.75" y="590.7" font-size="34.8" fill="#000" textLength="93.61" lengthAdjust="spacingAndGlyphs">Pencil</text>
<text x="450.34" y="590.7" font-size="34.8" fill="#000" textLength="93.93" lengthAdjust="spacingAndGlyphs">Pencil</text>
<text x="206.94" y="668.7" font-size="34.8" fill="#000" textLength="63.51" lengthAdjust="spacingAndGlyphs">Biro</text>
<text x="469.08" y="668.7" font-size="34.8" fill="#000" textLength="58.22" lengthAdjust="spacingAndGlyphs">Bag</text>
<text x="195.79" y="746.7" font-size="34.8" fill="#000" textLength="85.35" lengthAdjust="spacingAndGlyphs">Table</text>
<text x="459.81" y="746.7" font-size="34.8" fill="#000" textLength="73.84" lengthAdjust="spacingAndGlyphs">Desk</text>
<text x="195.66" y="824.7" font-size="34.8" fill="#000" textLength="83.9" lengthAdjust="spacingAndGlyphs">Chalk</text>
<text x="454.66" y="824.7" font-size="34.8" fill="#000" textLength="83.9" lengthAdjust="spacingAndGlyphs">Chalk</text>
<text x="175.75" y="902.7" font-size="34.8" fill="#000" textLength="124.19" lengthAdjust="spacingAndGlyphs">Envelop</text>
<text x="470.01" y="902.7" font-size="34.8" fill="#000" textLength="54.15" lengthAdjust="spacingAndGlyphs">File</text>
<text y="519" font-size="48.5" fill="#000" font-weight="700" stroke-width="0.9" stroke-linejoin="round"><tspan x="622.37" textLength="26.71" lengthAdjust="spacingAndGlyphs" fill="#000" stroke="#000">=</tspan><tspan x="648.6" textLength="54.47" lengthAdjust="spacingAndGlyphs" fill="#000" stroke="#000">IF(</tspan><tspan x="705.44" textLength="59.38" lengthAdjust="spacingAndGlyphs" fill="#2f66c8" stroke="#2f66c8">A2</tspan><tspan x="764.43" textLength="27.29" lengthAdjust="spacingAndGlyphs" fill="#000" stroke="#000">=</tspan><tspan x="792.35" textLength="56.05" lengthAdjust="spacingAndGlyphs" fill="#c9323f" stroke="#c9323f">B2</tspan><tspan x="846.6" textLength="17.46" lengthAdjust="spacingAndGlyphs" fill="#000" stroke="#000">,</tspan><tspan x="863.03" textLength="23.09" lengthAdjust="spacingAndGlyphs" fill="#000" stroke="#000">"</tspan><tspan x="886.51" textLength="48.55" lengthAdjust="spacingAndGlyphs" fill="#000" stroke="#000">M</tspan><tspan x="932.08" textLength="35.35" lengthAdjust="spacingAndGlyphs" fill="#000" stroke="#000">A</tspan><tspan x="966.35" textLength="27.23" lengthAdjust="spacingAndGlyphs" fill="#000" stroke="#000">T</tspan><tspan x="994.44" textLength="28.12" lengthAdjust="spacingAndGlyphs" fill="#000" stroke="#000">C</tspan><tspan x="1022.85" textLength="33.91" lengthAdjust="spacingAndGlyphs" fill="#000" stroke="#000">H</tspan><tspan x="1056.79" textLength="22.68" lengthAdjust="spacingAndGlyphs" fill="#000" stroke="#000">"</tspan><tspan x="1078.9" textLength="17.07" lengthAdjust="spacingAndGlyphs" fill="#000" stroke="#000">,</tspan><tspan x="1095.17" textLength="22.81" lengthAdjust="spacingAndGlyphs" fill="#000" stroke="#000">"</tspan><tspan x="1118.38" textLength="48.91" lengthAdjust="spacingAndGlyphs" fill="#000" stroke="#000">M</tspan><tspan x="1166.42" textLength="13.6" lengthAdjust="spacingAndGlyphs" fill="#000" stroke="#000">I</tspan><tspan x="1180.94" textLength="25.9" lengthAdjust="spacingAndGlyphs" fill="#000" stroke="#000">S</tspan><tspan x="1206.87" textLength="49.03" lengthAdjust="spacingAndGlyphs" fill="#000" stroke="#000">M</tspan><tspan x="1252.57" textLength="32.77" lengthAdjust="spacingAndGlyphs" fill="#000" stroke="#000">A</tspan><tspan x="1284.55" textLength="27.75" lengthAdjust="spacingAndGlyphs" fill="#000" stroke="#000">T</tspan><tspan x="1313.87" textLength="27.56" lengthAdjust="spacingAndGlyphs" fill="#000" stroke="#000">C</tspan><tspan x="1342.85" textLength="32.8" lengthAdjust="spacingAndGlyphs" fill="#000" stroke="#000">H</tspan><tspan x="1375.81" textLength="22.54" lengthAdjust="spacingAndGlyphs" fill="#000" stroke="#000">"</tspan><tspan x="1402.8" textLength="13.44" lengthAdjust="spacingAndGlyphs" fill="#000" stroke="#000">)</tspan></text>
<text y="809.5" font-size="35" fill="#000" font-weight="700"><tspan x="939.02" textLength="27.11" lengthAdjust="spacingAndGlyphs">IF</tspan> <tspan x="980.49" textLength="208.12" lengthAdjust="spacingAndGlyphs">parenthesis</tspan></text>
<text y="887.4" font-size="34.5" fill="#000" font-weight="700"><tspan x="820.61" textLength="100.36" lengthAdjust="spacingAndGlyphs">Press</tspan> <tspan x="925.61" textLength="93.88" lengthAdjust="spacingAndGlyphs">Enter</tspan> <tspan x="1031.49" textLength="46.14" lengthAdjust="spacingAndGlyphs">on</tspan> <tspan x="1083.55" textLength="74.96" lengthAdjust="spacingAndGlyphs">your</tspan> <tspan x="1170.22" textLength="170.33" lengthAdjust="spacingAndGlyphs">keyboard</tspan></text>
<path d="M1189.300 784.500 L1380 556" stroke="#000" stroke-width="5.200" fill="none"/><path d="M1395.600 536.800 L1369.400 553.500 L1377.900 554.100 L1381.800 557.900 L1384.400 565.900 Z" fill="#000"/>
<path d="M1486 323 H1497.200 L1491.600 316.800 Z" fill="#777"/>
<text x="131.91" y="973.1" font-size="19.5" fill="#217346" font-weight="700" textLength="64.06" lengthAdjust="spacingAndGlyphs">Sheet1</text>
<path d="M37 962.500 V973.500 L30.500 968 Z M65.800 962.500 V973.500 L72.300 968 Z" fill="#c3c3c3"/>
<g fill="none" stroke="#7a7a7a" stroke-width="1.300"><circle cx="259" cy="968" r="10.300"/><path d="M253.500 968 H264.500 M259 962.500 V973.500"/></g>
<path d="M937 962 V973.200 L930.800 967.600 Z" fill="#555"/>
<path d="M1462.500 962 V973.200 L1468.700 967.600 Z" fill="#555"/>
<path d="M1486 937 H1497.200 L1491.600 943.200 Z" fill="#777"/>
<text x="12.58" y="1007.4" font-size="15.5" fill="#4a4a4a" textLength="36.53" lengthAdjust="spacingAndGlyphs">Enter</text>
<text x="157.7" y="1007.4" font-size="15.5" fill="#4a4a4a" textLength="165.73" lengthAdjust="spacingAndGlyphs">Accessibility: Investigate</text>
<g fill="none" stroke="#4a4a4a" stroke-width="1.400"><path d="M90.200 1010.300 H84.300 V993.900 H104 V999.300 M84.300 996.600 H104 M86.800 999.800 H91.500 M86.800 1002.700 H90 M86.800 1005.600 H89.300" /><circle cx="97.800" cy="1005.600" r="5.900" fill="#f3f2f1"/><circle cx="97.800" cy="1005.600" r="2.900" fill="#4a4a4a" stroke="none"/></g>
<g fill="none" stroke-linecap="round" stroke-linejoin="round"><path d="M131.600 997.300 C135 999.600 143.500 999.600 147 997.300 M139.200 999 C139 1002 137.600 1004.500 135.500 1010.800 M138.300 1004.300 L140.300 1006.600" stroke="#4a4a4a" stroke-width="3.700"/><path d="M131.600 997.300 C135 999.600 143.500 999.600 147 997.300 M139.200 999 C139 1002 137.600 1004.500 135.500 1010.800 M138.300 1004.300 L140.300 1006.600" stroke="#f3f2f1" stroke-width="1.300"/><circle cx="139.200" cy="994.800" r="2.500" stroke="#4a4a4a" stroke-width="1.300" fill="#f3f2f1"/><path d="M142 1002.800 L151 1011.800 M151 1002.800 L142 1011.800" stroke="#4a4a4a" stroke-width="1.300" stroke-linecap="butt"/></g>
<g fill="none" stroke="#b5b3b1" stroke-width="1.300"><rect x="1064.500" y="991.800" width="19.300" height="18.800"/><path d="M1064.500 998 H1083.800 M1064.500 1004.300 H1083.800 M1071 991.800 V1010.600 M1077.400 991.800 V1010.600"/></g>
<g fill="none" stroke="#b5b3b1" stroke-width="1.300"><rect x="1124.300" y="991.800" width="20.500" height="18.800"/><rect x="1128.600" y="995.300" width="12" height="12"/><path d="M1131 999 H1138 M1131 1001.500 H1138 M1131 1004 H1138" stroke-width="1"/></g>
<g fill="none" stroke="#b5b3b1" stroke-width="1.300"><rect x="1184.800" y="991.800" width="19.800" height="18.800"/><path d="M1184.800 1002.500 H1198 V991.800 M1191.500 991.800 V1002.500"/></g>
<path d="M1234 1001.300 H1244.500 M1408.500 1001.300 H1420.500 M1414.500 995.300 V1007.300" stroke="#b5b3b1" stroke-width="1.300"/>
<path d="M1253 1001.300 H1401" stroke="#3b3a39" stroke-width="1.400"/><path d="M1326.900 996.800 V1005.800" stroke="#3b3a39" stroke-width="2"/>
<text x="1438.6" y="1007.1" font-size="15.5" fill="#b0aeac" textLength="40.82" lengthAdjust="spacingAndGlyphs">270%</text>
</svg>
</div>
</body></html>
